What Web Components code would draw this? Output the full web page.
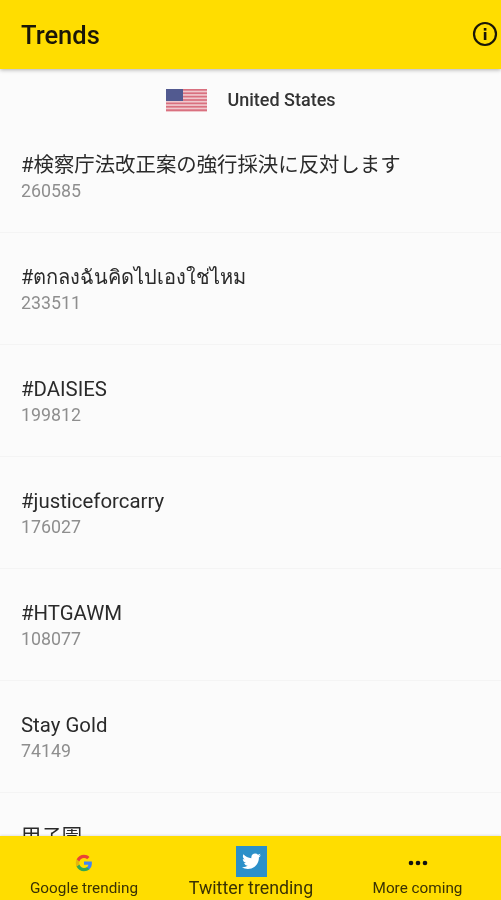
<!DOCTYPE html>
<html>
<head>
<meta charset="utf-8">
<style>
    html, body { margin: 0; height: 100%; }
    body { font-family: Roboto, "Noto Sans CJK JP", sans-serif; background: #fbfbfb; }
</style>
</head>
<body>
<trends-app>
    <trends-header title="Trends"></trends-header>
    <country-row name="United States"></country-row>
    <trend-item name="#検察庁法改正案の強行採決に反対します" count="260585"></trend-item>
    <trend-item name="#ตกลงฉันคิดไปเองใช่ไหม" count="233511" style="--name-size: 20px"></trend-item>
    <trend-item name="#DAISIES" count="199812"></trend-item>
    <trend-item name="#justiceforcarry" count="176027"></trend-item>
    <trend-item name="#HTGAWM" count="108077"></trend-item>
    <trend-item name="Stay Gold" count="74149"></trend-item>
    <trend-item name="甲子園" count="61230"></trend-item>
    <bottom-bar slot="bar"></bottom-bar>
</trends-app>
<script>
class TrendsApp extends HTMLElement {
    constructor() {
        super();
        this.attachShadow({ mode: 'open' }).innerHTML = `
            <style>
            :host { display: flex; flex-flow: column nowrap; height: 900px; overflow: hidden; filter: blur(.45px); }
            div.list { flex: 1 0 0; min-height: 0; overflow: hidden; display: flex; flex-flow: column nowrap; }
            </style>
            <div class="list"><slot></slot></div>
            <slot name="bar"></slot>
        `;
    }
}

class TrendsHeader extends HTMLElement {
    connectedCallback() {
        this.attachShadow({ mode: 'open' }).innerHTML = `
            <style>
            :host {
                display: flex; flex: none; position: relative; z-index: 1;
                height: 69px; align-items: center; justify-content: space-between;
                padding: 0 3px 0 21px; background: #ffdd00; color: #1a1708;
                box-shadow: 0 1px 4px rgba(0, 0, 0, .3);
            }
            span { font-size: 25.5px; font-weight: 500; }
            svg { display: block; margin-bottom: 1px; }
            </style>
            <span>${this.getAttribute('title')}</span>
            <svg width="26" height="26" viewBox="0 0 26 26">
                <circle cx="13" cy="13" r="11" fill="none" stroke="#1a1708" stroke-width="2.2"/>
                <rect x="11.8" y="11" width="2.6" height="8" fill="#1a1708"/>
                <rect x="11.8" y="7" width="2.6" height="2.6" fill="#1a1708"/>
            </svg>
        `;
    }
}

class CountryRow extends HTMLElement {
    connectedCallback() {
        let stripes = '';
        for (let i = 0; i < 7; i++)
            stripes += `<rect y="${i * 22 / 6.5}" width="41" height="1.7" fill="#d9707f"/>`;
        this.attachShadow({ mode: 'open' }).innerHTML = `
            <style>
            :host {
                display: flex; flex: none; height: 52px; padding: 9px 0 0 1px; box-sizing: border-box;
                align-items: center; justify-content: center; gap: 20px;
            }
            span { font-size: 18px; font-weight: 500; color: #333; }
            svg { display: block; position: relative; top: 1px; }
            </style>
            <svg width="41" height="23" viewBox="0 0 41 23">
                <rect width="41" height="23" fill="#f0c8cd"/>
                ${stripes}
                <rect width="17" height="12" fill="#525a90"/>
            </svg>
            <span>${this.getAttribute('name')}</span>
        `;
    }
}

class TrendItem extends HTMLElement {
    connectedCallback() {
        this.attachShadow({ mode: 'open' }).innerHTML = `
            <style>
            :host {
                display: flex; flex: none; flex-flow: column nowrap; box-sizing: border-box;
                height: 112px; padding: 32px 21px 0; border-bottom: 1px solid #f4f4f4;
            }
            .name { font-size: var(--name-size, 20.4px); line-height: 24px; color: #2a2a2a; white-space: nowrap; }
            .count { font-size: 17.8px; line-height: 22px; margin-top: 3px; color: #8e8e8e; }
            </style>
            <div class="name">${this.getAttribute('name')}</div>
            <div class="count">${this.getAttribute('count')}</div>
        `;
    }
}

class BottomBar extends HTMLElement {
    connectedCallback() {
        this.attachShadow({ mode: 'open' }).innerHTML = `
            <style>
            :host {
                display: grid; flex: none; position: relative; height: 64px;
                grid-template-columns: 168px 166px 167px; background: #ffdd00; color: #3a3204;
                box-shadow: 0 -1px 2px rgba(0, 0, 0, .1);
            }
            div.tab { display: flex; flex-flow: column nowrap; align-items: center; justify-content: flex-end; }
            div.icon { height: 32px; display: flex; align-items: center; justify-content: center; }
            span { font-size: 15.3px; line-height: 18px; padding-bottom: 3px; white-space: nowrap; }
            span.big { font-size: 17.8px; line-height: 20px; padding-bottom: 2px; }
            svg { display: block; }
            </style>
            <div class="tab">
                <div class="icon">
                    <svg width="18" height="18" viewBox="0 0 48 48">
                        <path fill="#4285f4" d="M45 24.500c0-1.600-.1-3.100-.4-4.500H24v8.500h11.800c-.5 2.700-2 5-4.300 6.600v5.500h7C42.600 36.800 45 31.200 45 24.500z"/>
                        <path fill="#34a853" d="M24 46c5.900 0 10.900-2 14.500-5.300l-7-5.500c-2 1.300-4.500 2.100-7.500 2.100-5.700 0-10.600-3.900-12.300-9.100H4.400v5.600C8 41.100 15.400 46 24 46z"/>
                        <path fill="#e5b70c" d="M11.700 28.200c-.4-1.300-.7-2.700-.7-4.200s.3-2.900.7-4.200v-5.600H4.400C2.900 17.100 2 20.500 2 24s.9 6.900 2.400 9.800l7.300-5.600z"/>
                        <path fill="#ea4335" d="M24 10.700c3.200 0 6.100 1.100 8.400 3.300l6.300-6.300C34.900 4.200 29.900 2 24 2 15.400 2 8 6.900 4.400 14.200l7.300 5.600c1.700-5.200 6.600-9.100 12.300-9.100z"/>
                    </svg>
                </div>
                <span>Google trending</span>
            </div>
            <div class="tab">
                <div class="icon" style="height:34px">
                    <svg width="31" height="31" viewBox="0 0 31 31">
                        <rect width="31" height="31" fill="#2c90c9"/>
                        <path fill="#fff" d="M25 9.300c-.7.300-1.500.5-2.200.6.800-.5 1.400-1.200 1.700-2.100-.8.400-1.600.8-2.500.9-.7-.8-1.700-1.200-2.800-1.200-2.100 0-3.900 1.700-3.900 3.900 0 .3 0 .6.100.9-3.200-.2-6.100-1.700-8-4-.3.600-.5 1.200-.5 1.900 0 1.300.7 2.500 1.700 3.200-.6 0-1.200-.2-1.800-.5v.1c0 1.900 1.300 3.400 3.100 3.800-.6.200-1.200.2-1.800.1.500 1.500 1.900 2.600 3.600 2.700-1.600 1.300-3.700 1.900-5.700 1.600 1.700 1.100 3.800 1.700 5.900 1.700 7.100 0 11-5.900 11-11v-.5c.8-.5 1.400-1.200 1.900-2z"/>
                    </svg>
                </div>
                <span class="big">Twitter trending</span>
            </div>
            <div class="tab">
                <div class="icon">
                    <svg width="20" height="6" viewBox="0 0 20 6" fill="#111">
                        <circle cx="3" cy="3" r="2.300"/><circle cx="10" cy="3" r="2.300"/><circle cx="17" cy="3" r="2.300"/>
                    </svg>
                </div>
                <span>More coming</span>
            </div>
        `;
    }
}

customElements.define('trends-app', TrendsApp);
customElements.define('trends-header', TrendsHeader);
customElements.define('country-row', CountryRow);
customElements.define('trend-item', TrendItem);
customElements.define('bottom-bar', BottomBar);
</script>
</body>
</html>
